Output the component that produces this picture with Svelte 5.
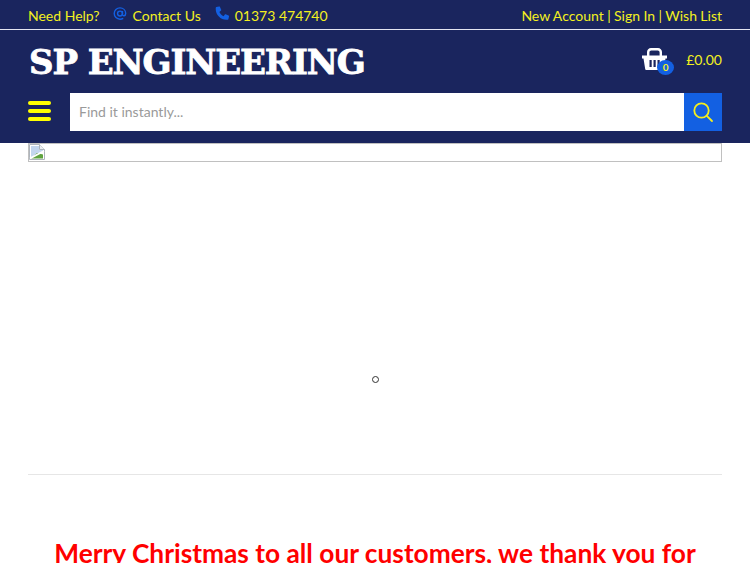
<script>
  const accountLinks = ["New Account", "Sign In", "Wish List"];
</script>

<div class="page">
  <div class="topbar">
    <div class="top-left">
      <span>Need Help?</span>
      <a class="contact" href="#contact">
        <svg class="ico-at" viewBox="0 0 16 16" width="14" height="14" fill="none" stroke="#1360e2" stroke-width="1.6">
          <circle cx="8" cy="7.500" r="2.800" />
          <path d="M10.800 4.700v4c0 1.900 3.700 1.900 3.700-1.300C14.500 3.500 11.500 1 8 1 4.300 1 1.400 3.800 1.400 7.500S4.300 14 8 14c1.400 0 2.700-.4 3.700-1" />
        </svg>
        Contact Us
      </a>
      <a class="contact phone" href="#phone">
        <svg class="ico-phone" viewBox="0 0 16 16" width="14" height="15" fill="#1360e2">
          <path d="M1.500.7 4.700 0c.4-.1.800.1 1 .5l1.400 3.300c.1.300 0 .7-.2.900L5 6.200c1 2.100 2.700 3.800 4.800 4.800l1.500-1.900c.2-.3.600-.4.900-.2l3.300 1.400c.4.200.6.600.5 1l-.7 3.200c-.1.300-.4.600-.8.600C6.700 16 0 9.300 .9 1.500c0-.4.300-.7.600-.8z" />
        </svg>
        01373 474740
      </a>
    </div>
    <div class="top-right">
      {#each accountLinks as link, i}
        {#if i > 0}{" | "}{/if}<a href="#account">{link}</a>
      {/each}
    </div>
  </div>

  <header class="header">
    <div class="brand-row">
      <a class="logo" href="#home">SP ENGINEERING</a>
      <div class="cart">
        <div class="basket">
          <svg viewBox="0 0 25 22" width="25" height="22" fill="#fff">
            <path d="M5 9V4C5 1.800 6.800 0 9 0h7c2.200 0 4 1.800 4 4v5h-2.400V4.500c0-1-.8-1.900-1.900-1.900H9.300c-1.100 0-1.900.9-1.900 1.900V9z" />
            <path fill-rule="evenodd" d="M0 7.500h25v3.100h-1.500L21.800 21c-.1.600-.6 1-1.200 1H4.400c-.6 0-1.100-.4-1.200-1L1.500 10.600H0zM7.500 12v7h2.200v-7zm4 0v7h2.200v-7zm4 0v7h2.200v-7z" />
          </svg>
          <span class="badge">0</span>
        </div>
        <span class="total">£0.00</span>
      </div>
    </div>
    <div class="search-row">
      <button class="burger" aria-label="Menu">
        <span></span><span></span><span></span>
      </button>
      <div class="search">
        <input type="text" placeholder="Find it instantly..." />
        <button class="search-btn" aria-label="Search">
          <svg viewBox="0 0 22 22" width="22" height="22" fill="none" stroke="#f5ee1c" stroke-width="1.800">
            <circle cx="9.500" cy="9.500" r="7.200" />
            <path d="M14.800 14.800 20 20" stroke-linecap="round" />
          </svg>
        </button>
      </div>
    </div>
  </header>

  <main class="main">
    <div class="slider">
      <div class="broken-img">
        <svg viewBox="0 0 16 16" width="16" height="16">
          <path d="M.5.500h10l5 5v10H.5z" fill="#fff" stroke="#aeb4bc" />
          <path d="M10.500.500v5h5" fill="#eceff2" stroke="#aeb4bc" />
          <path d="M2 2h8v4h4v1L2 13z" fill="#c3d6ee" />
          <path d="M2 14.500 8 9l6 1.500v4z" fill="#5fa33f" />
          <path d="M1 14.500 15 7" stroke="#fff" stroke-width="1.800" />
        </svg>
      </div>
      <div class="dots"><span class="dot"></span></div>
    </div>
    <h2 class="notice">Merry Christmas to all our customers, we thank you for</h2>
  </main>
</div>

<style>
  :global(body) {
    margin: 0;
    background: #fff;
  }

  .page {
    width: 750px;
    height: 563px;
    overflow: hidden;
    font-family: Lato, "Open Sans", sans-serif;
    font-size: 14px;
  }

  a {
    color: inherit;
    text-decoration: none;
  }

  .topbar {
    height: 29px;
    box-sizing: border-box;
    padding: 2px 28px 0;
    display: flex;
    justify-content: space-between;
    align-items: center;
    background: #1a255e;
    color: #f3f01e;
  }

  .top-left {
    display: flex;
    gap: 13px;
  }

  .contact {
    display: flex;
    align-items: center;
    gap: 6px;
  }

  .phone {
    margin-left: 1px;
  }

  .ico-at,
  .ico-phone {
    position: relative;
    top: -2px;
  }

  .top-right {
    white-space: pre;
    word-spacing: -0.17px;
  }

  .header {
    background: #1a255e;
    border-top: 1px solid #e4e6f2;
    height: 114px;
    box-sizing: border-box;
    padding: 0 28px;
  }

  .brand-row {
    height: 63px;
    display: flex;
    justify-content: space-between;
    align-items: center;
  }

  .logo {
    font-family: "DejaVu Serif", serif;
    font-weight: 900;
    font-size: 34px;
    line-height: 34px;
    color: #fff;
    letter-spacing: -1.1px;
    -webkit-text-stroke: 0.8px #fff;
    margin-left: 1px;
  }

  .cart {
    display: flex;
    align-items: center;
    gap: 19px;
    margin-top: -5px;
  }

  .basket {
    position: relative;
    width: 25px;
    height: 22px;
  }

  .basket svg {
    display: block;
  }

  .badge {
    position: absolute;
    left: 15px;
    top: 12px;
    width: 17px;
    height: 15px;
    border-radius: 50%;
    background: #1360e2;
    color: #f3f01e;
    font-size: 10px;
    font-weight: 700;
    line-height: 15px;
    text-align: center;
  }

  .total {
    color: #f3f01e;
  }

  .search-row {
    display: flex;
    align-items: center;
    height: 38px;
  }

  .burger {
    width: 42px;
    height: 20px;
    margin-top: -2px;
    border: 0;
    background: none;
    display: flex;
    flex-direction: column;
    justify-content: space-between;
    padding: 0 19px 0 0;
    box-sizing: border-box;
  }

  .burger span {
    display: block;
    height: 4px;
    border-radius: 2px;
    background: #ffff00;
  }

  .search {
    flex: 1;
    display: flex;
    height: 38px;
  }

  .search input {
    flex: 1;
    border: 0;
    outline: 0;
    padding: 0 9px 2px;
    font-family: inherit;
    font-size: 14px;
    background: #fff;
  }

  .search input::placeholder {
    color: #9a9a9a;
    opacity: 1;
  }

  .search-btn {
    width: 38px;
    border: 0;
    padding: 0;
    background: #1360e2;
    display: flex;
    align-items: center;
    justify-content: center;
  }

  .main {
    padding: 0 28px;
  }

  .slider {
    height: 331px;
    border-bottom: 1px solid #e6e6e6;
  }

  .broken-img {
    height: 19px;
    box-sizing: border-box;
    border: 1px solid #c0c0c0;
  }

  .broken-img svg {
    display: block;
  }

  .dots {
    display: flex;
    justify-content: center;
    padding-top: 214px;
  }

  .dot {
    width: 7px;
    height: 7px;
    box-sizing: border-box;
    border: 1px solid #333;
    border-radius: 50%;
  }

  .notice {
    margin: 61px -4px 0;
    color: #ff0000;
    font-size: 26.300px;
    font-weight: 700;
    line-height: 34px;
    text-align: center;
  }
</style>
